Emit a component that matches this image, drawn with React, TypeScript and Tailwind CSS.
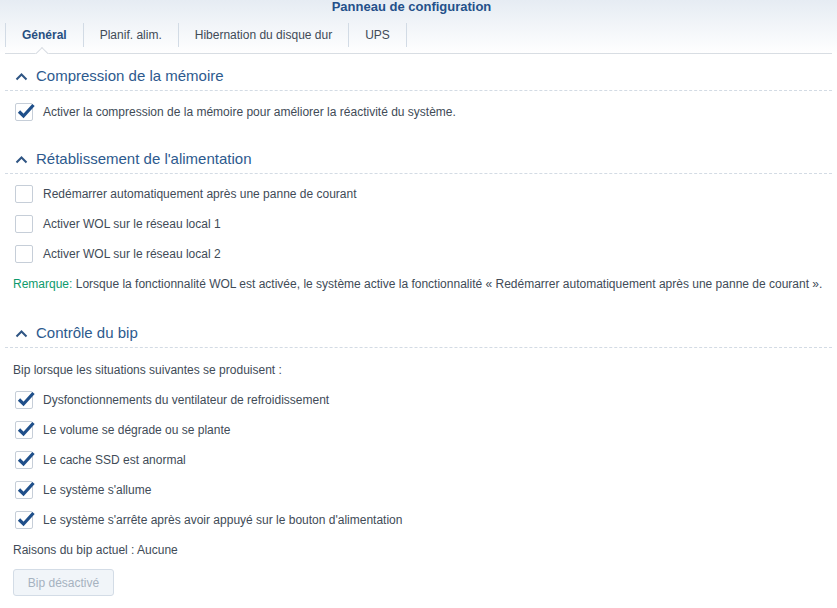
import React from "react";

const Check = ({ checked }: { checked: boolean }) => (
  <div className="relative w-[18px] h-[18px] border border-[#c6ced8] bg-white rounded-[2px] shrink-0">
    {checked && (
      <svg className="absolute left-[0px] top-[-2px]" width="20" height="18" viewBox="0 0 20 18">
        <path d="M3 9.5 L7.5 14 L17.5 3" fill="none" stroke="#1f4f8a" strokeWidth="3.2" strokeLinecap="butt" strokeLinejoin="miter" />
      </svg>
    )}
  </div>
);

const Row = ({ checked, label }: { checked: boolean; label: string }) => (
  <div className="flex items-center h-[30px] pl-[15px] gap-[10px]">
    <Check checked={checked} />
    <span>{label}</span>
  </div>
);

const Header = ({ title }: { title: string }) => (
  <div className="mx-[5px] border-b border-dashed border-[#d3dbe4] h-[37px] flex items-center gap-[8px] pl-[10px] pt-[8px]">
    <svg width="13" height="9" viewBox="0 0 13 9">
      <path d="M1.5 7.5 L6.5 2.5 L11.5 7.5" fill="none" stroke="#2f5584" strokeWidth="2" />
    </svg>
    <span className="text-[15px] text-[#2d5a8e]">{title}</span>
  </div>
);

export default function App() {
  return (
    <div className="w-[837px] h-[608px] bg-white overflow-hidden text-[12px] text-[#414b57]" style={{ fontFamily: '"Liberation Sans", Arial, sans-serif' }}>
      <div className="bg-gradient-to-b from-[#e6ecf3] to-[#ffffff]">
        <div className="h-[16px] flex justify-center items-start">
          <span className="font-bold text-[13px] leading-[15px] text-[#24508a] ml-[-14px] mt-[-1px]">Panneau de configuration</span>
        </div>
        <div className="relative h-[38px] mx-[5px] border-b border-[#d8dde3] flex items-center">
          <div className="flex items-center h-[24px]">
            {["Général", "Planif. alim.", "Hibernation du disque dur", "UPS"].map((t, i) => (
              <div key={t} className={"h-full flex items-center px-[16px] border-l border-[#d2dbe5] " + (i === 3 ? "border-r" : "")}>
                <span className={i === 0 ? "font-bold text-[#284f80]" : "text-[#414b57]"}>{t}</span>
              </div>
            ))}
          </div>
          <div className="absolute left-[32px] bottom-[-6px] w-[10px] h-[10px] bg-white border-l border-t border-[#d8dde3] rotate-45" />
        </div>
      </div>
      <div className="relative bg-white">
        <Header title="Compression de la mémoire" />
        <div className="pt-[6px]">
          <Row checked label="Activer la compression de la mémoire pour améliorer la réactivité du système." />
        </div>
        <div className="h-[10px]" />
        <Header title="Rétablissement de l'alimentation" />
        <div className="pt-[5px]">
          <Row checked={false} label="Redémarrer automatiquement après une panne de courant" />
          <Row checked={false} label="Activer WOL sur le réseau local 1" />
          <Row checked={false} label="Activer WOL sur le réseau local 2" />
        </div>
        <div className="pl-[13px] h-[30px] flex items-center">
          <span><span className="text-[#0d9a6c]">Remarque:</span> Lorsque la fonctionnalité WOL est activée, le système active la fonctionnalité « Redémarrer automatiquement après une panne de courant ».</span>
        </div>
        <div className="h-[12px]" />
        <Header title="Contrôle du bip" />
        <div className="pl-[13px] h-[30px] mt-[7px] flex items-center">Bip lorsque les situations suivantes se produisent :</div>
        <Row checked label="Dysfonctionnements du ventilateur de refroidissement" />
        <Row checked label="Le volume se dégrade ou se plante" />
        <Row checked label="Le cache SSD est anormal" />
        <Row checked label="Le système s'allume" />
        <Row checked label="Le système s'arrête après avoir appuyé sur le bouton d'alimentation" />
        <div className="pl-[13px] h-[30px] flex items-center">Raisons du bip actuel : Aucune</div>
        <div className="pl-[13px] pt-[4px]">
          <button className="w-[101px] h-[27px] rounded-[3px] border border-[#d3dce6] bg-[#f1f5f9] text-[#a6b2c0] text-[12px]">Bip désactivé</button>
        </div>
      </div>
    </div>
  );
}
